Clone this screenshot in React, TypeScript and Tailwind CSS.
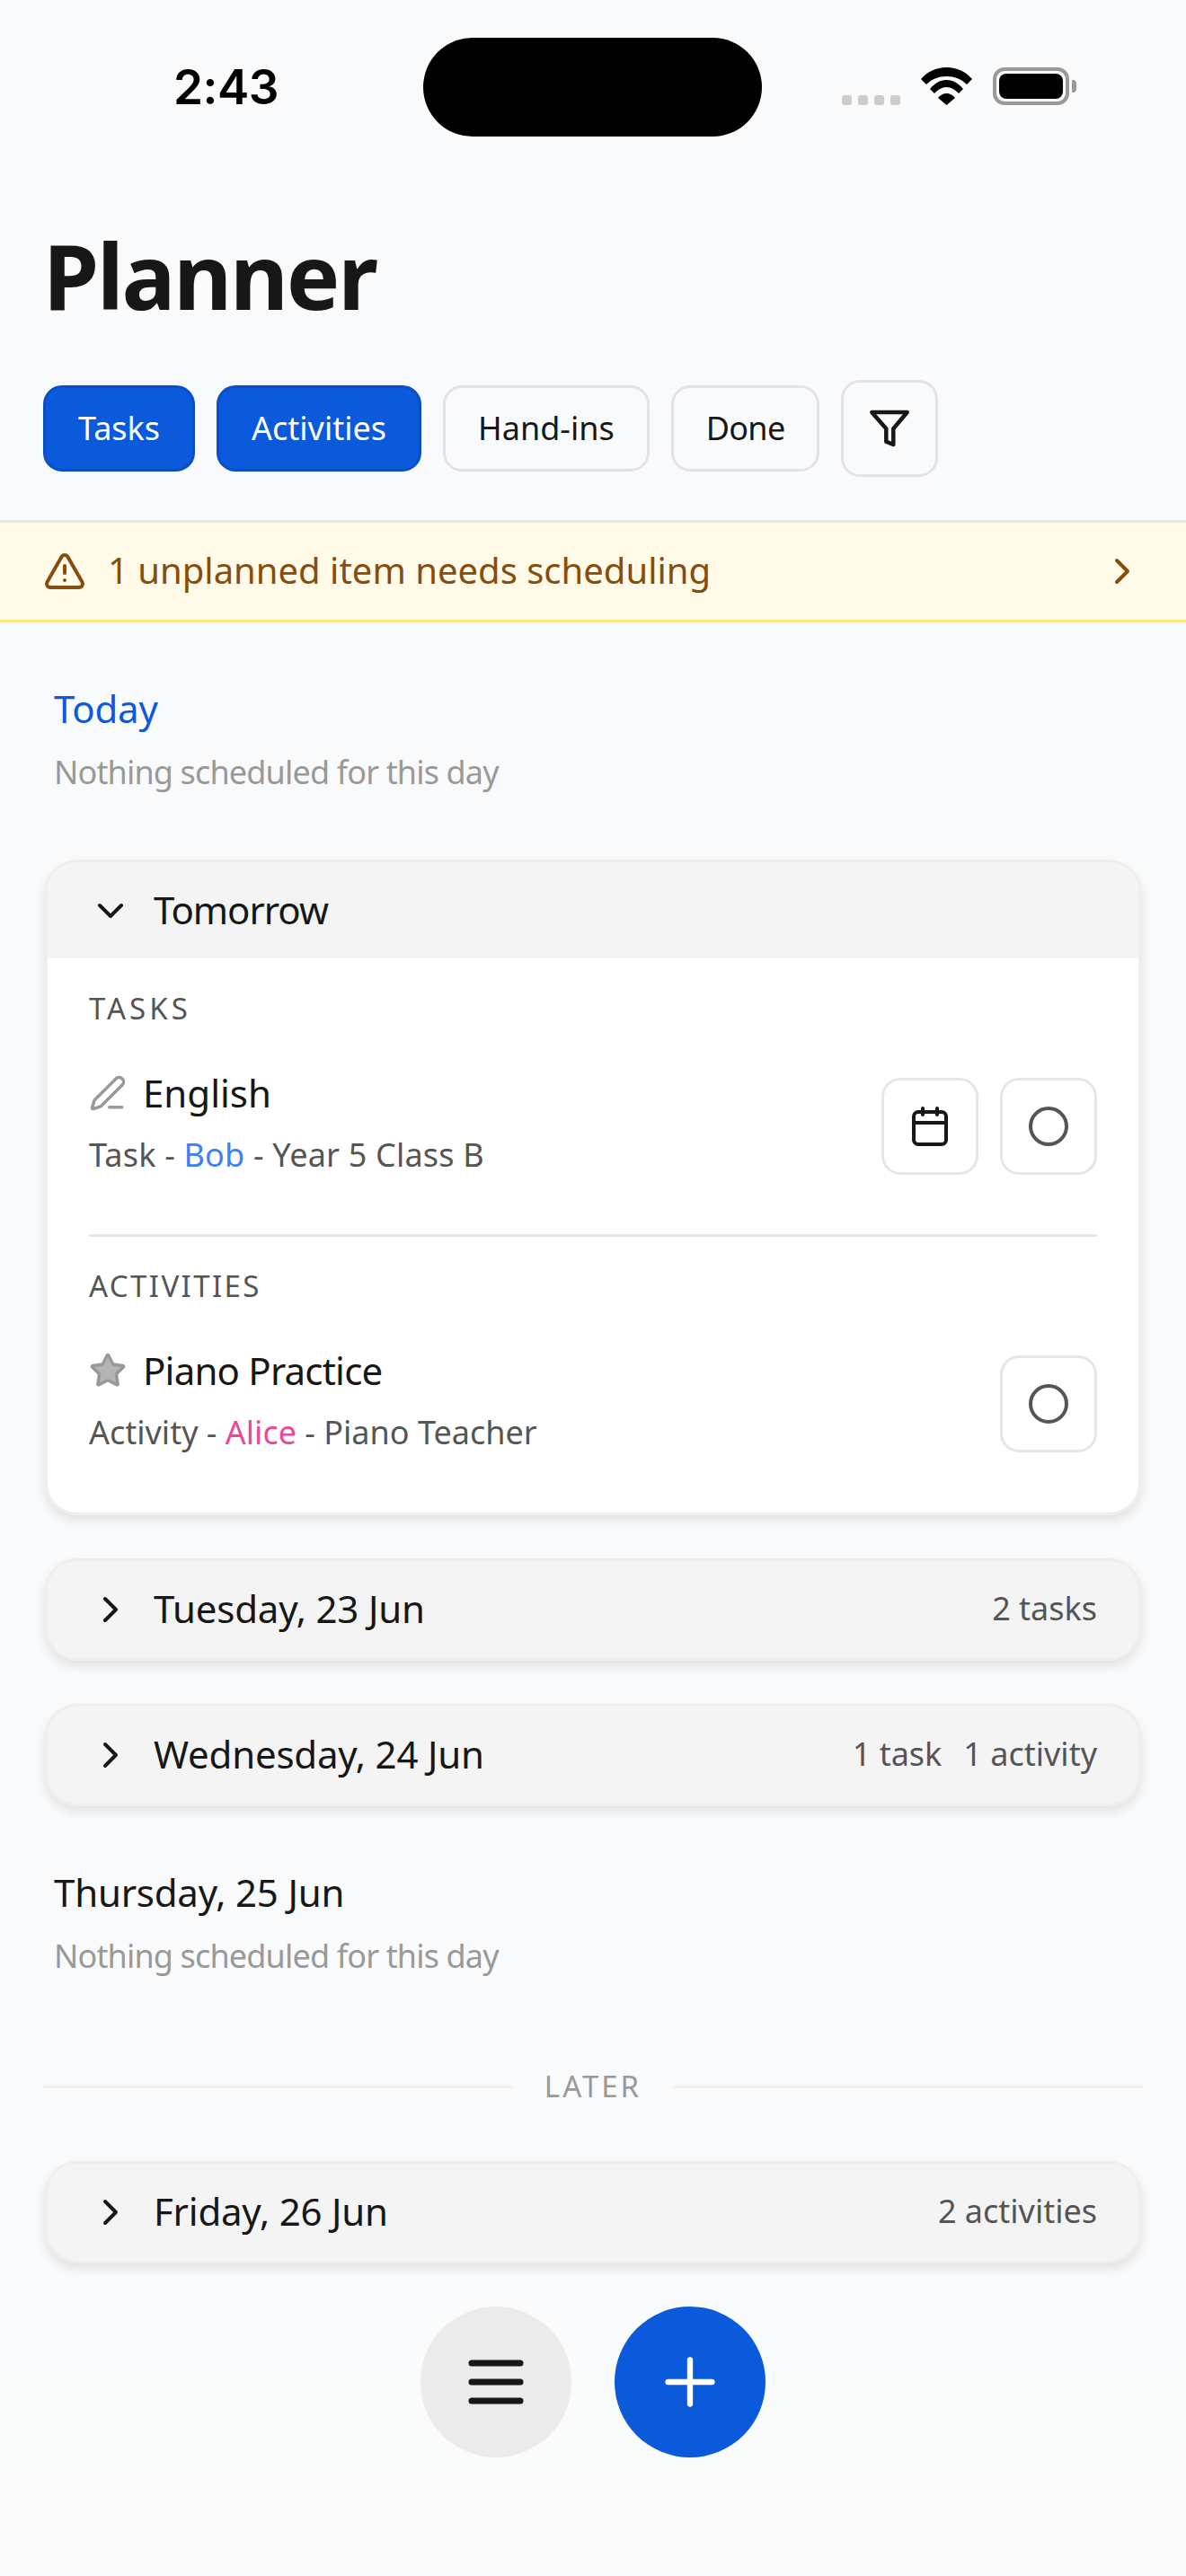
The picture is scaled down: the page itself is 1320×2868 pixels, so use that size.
import React from 'react';
import { ChevronDown, ChevronRight, Circle, PenLine, Plus, Star, TriangleAlert } from 'lucide-react';

const StatusBar = () => (
  <div className="grid grid-cols-[471px_377px_1fr] pt-[42px]">
    <div className="pl-[193px] pt-[2px] h-[110px] flex items-center font-['Inter',sans-serif] font-semibold text-[53px] text-black tracking-[-0.5px]">2:43</div>
    <div className="h-[110px] rounded-[55px] bg-black" />
    <div className="pl-[89px] pt-[33px] flex items-end h-[75px]">
      <div className="flex gap-[7px] mr-[23px]">
        <span className="w-[11px] h-[11px] rounded-[3px] bg-[#cccccc]" />
        <span className="w-[11px] h-[11px] rounded-[3px] bg-[#cccccc]" />
        <span className="w-[11px] h-[11px] rounded-[3px] bg-[#cccccc]" />
        <span className="w-[11px] h-[11px] rounded-[3px] bg-[#cccccc]" />
      </div>
      <svg width="57" height="42" viewBox="0 0 57 42" fill="#000">
        <path d="M0 13C7 5 17 0 28.500 0S50 5 57 13L51 19C45 13 37 10 28.500 10S12 13 6 19Z" />
        <path d="M10 24C15 18 21 14 28.500 14S42 18 47 24L42 29C38 25 34 22 28.500 22S19 25 15 29Z" />
        <path d="M19 34C21 31 25 29 28.500 29S36 31 38 34L28.500 42Z" />
      </svg>
      <div className="ml-[23px] w-[85px] h-[42px] rounded-[13px] border-[4px] border-[#999999] p-[3px]">
        <div className="w-full h-full rounded-[8px] bg-black" />
      </div>
      <div className="w-[5px] h-[14px] mb-[14px] ml-[3px] rounded-r-[4px] bg-[#999999]" />
    </div>
  </div>
);

const Chip = ({ label, active, tight }: { label: string; active?: boolean; tight?: boolean }) => (
  <div className={`h-[96px] px-[36px] flex items-center rounded-[21px] border-[3px] text-[36px] ${tight ? 'tracking-[-0.7px]' : ''} ${active ? 'bg-[#0b5adc] border-[#0a4fc4] text-white' : 'border-[#e2e3e6] text-[#171717]'}`}>
    {label}
  </div>
);

const IconButton = ({ children }: { children: React.ReactNode }) => (
  <div className="w-[108px] h-[108px] flex items-center justify-center rounded-[21px] border-[3px] border-[#e6e6e6] bg-white">
    {children}
  </div>
);

const CalendarIcon = () => (
  <svg width="40" height="44" viewBox="0 0 40 44" fill="none" stroke="#171717" strokeWidth="4" strokeLinecap="round">
    <rect x="2" y="6" width="36" height="36" rx="5" />
    <path d="M12 2V9M28 2V9M2 18H38" />
  </svg>
);

const FunnelIcon = () => (
  <svg width="46" height="42" viewBox="0 0 46 42" fill="none" stroke="#171717" strokeWidth="4.500" strokeLinejoin="round">
    <path d="M3.300 3H42.700L27.300 21.300V39L19.300 35.700V21.300Z" />
  </svg>
);

const MenuIcon = () => (
  <svg width="62" height="50" viewBox="0 0 62 50" stroke="#171717" strokeWidth="7" strokeLinecap="round">
    <path d="M4 4H58M4 25H58M4 46H58" />
  </svg>
);

const DayRow = ({ title, children }: { title: string; children: React.ReactNode }) => (
  <div className="h-[114px] px-[46px] flex items-center justify-between rounded-[36px] border-[3px] border-[#eeeeee] bg-[#f4f4f5] shadow-[0_6px_12px_rgba(0,0,0,0.1)]">
    <div className="flex items-center gap-[24px]">
      <ChevronRight size={48} color="#171717" strokeWidth={2} />
      <span className="-mt-[3px] text-[42px] tracking-[-0.2px] text-[#171717]">{title}</span>
    </div>
    <div className="-mt-[3px] flex gap-[24px] text-[36px] text-[#555555]">{children}</div>
  </div>
);

const EmptyDay = ({ title, today }: { title: string; today?: boolean }) => (
  <div className="pl-[10px] flex flex-col gap-[19px]">
    <div className={`text-[42px] leading-[57px] tracking-[-0.2px] ${today ? 'text-[#0b5adc]' : 'text-[#171717]'}`}>{title}</div>
    <div className="text-[36px] leading-[48px] tracking-[-0.85px] text-[#999999]">Nothing scheduled for this day</div>
  </div>
);

export default function App() {
  return (
    <div className="min-h-[2868px] bg-[#f9fafc] font-['Noto_Sans',sans-serif]">
      <StatusBar />

      <div className="pl-[48px] pt-[94px] pb-[48px] border-b-[3px] border-[#e6e6e6]">
        <h1 className="text-[100px] leading-[120px] font-bold tracking-[-2.200px] text-[#171717]">Planner</h1>
        <div className="mt-[57px] flex items-center gap-[24px]">
          <Chip label="Tasks" active />
          <Chip label="Activities" active />
          <Chip label="Hand-ins" />
          <Chip label="Done" tight />
          <div className="w-[108px] h-[108px] flex items-center justify-center rounded-[21px] border-[3px] border-[#e2e3e6]">
            <FunnelIcon />
          </div>
        </div>
      </div>

      <div className="h-[111px] pl-[48px] pr-[47px] flex items-center justify-between bg-[#fffbe8] border-b-[3px] border-[#fde68a]">
        <div className="flex items-center gap-[24px] text-[40px] text-[#854d0e]">
          <TriangleAlert size={48} color="#854d0e" strokeWidth={2} />
          <span className="-mt-[2px]">1 unplanned item needs scheduling</span>
        </div>
        <ChevronRight size={48} color="#854d0e" strokeWidth={2} />
      </div>

      <div className="px-[50px] pt-[67px]">
        <EmptyDay title="Today" today />

        <div className="mt-[73px] rounded-[36px] border-[3px] border-[#eeeeee] bg-white overflow-hidden shadow-[0_6px_12px_rgba(0,0,0,0.1)]">
          <div className="h-[107px] px-[46px] flex items-center gap-[24px] bg-[#f4f4f5]">
            <ChevronDown size={48} color="#171717" strokeWidth={2} />
            <span className="-mt-[3px] text-[42px] tracking-[-1px] text-[#171717]">Tomorrow</span>
          </div>
          <div className="px-[46px] pt-[35px] pb-[67px]">
            <div className="text-[33px] leading-[42px] tracking-[4px] text-[#555555]">TASKS</div>
            <div className="mt-[56px] h-[108px] flex items-center justify-between">
              <div className="-mt-[9px]">
                <div className="flex items-center gap-[18px] h-[54px] text-[42px] text-[#171717]">
                  <PenLine size={42} color="#999999" strokeWidth={2} />
                  English
                </div>
                <div className="mt-[18px] text-[36px] leading-[48px] tracking-[0.2px] text-[#555555]">
                  Task - <span className="text-[#3b82f6]">Bob</span> - Year 5 Class B
                </div>
              </div>
              <div className="flex gap-[24px]">
                <IconButton><CalendarIcon /></IconButton>
                <IconButton><Circle size={48} color="#555555" strokeWidth={2} /></IconButton>
              </div>
            </div>
            <div className="mt-[66px] h-[3px] bg-[#e6e6e6]" />
            <div className="mt-[34px] text-[33px] leading-[42px] tracking-[2.400px] text-[#555555]">ACTIVITIES</div>
            <div className="mt-[56px] h-[108px] flex items-center justify-between">
              <div className="-mt-[9px]">
                <div className="flex items-center gap-[18px] h-[54px] text-[42px] tracking-[-0.8px] text-[#171717]">
                  <Star size={42} color="#999999" fill="#b3b3b3" strokeWidth={2} />
                  Piano Practice
                </div>
                <div className="mt-[18px] text-[36px] leading-[48px] text-[#555555]">
                  Activity - <span className="text-[#ec4899]">Alice</span> - Piano Teacher
                </div>
              </div>
              <IconButton><Circle size={48} color="#555555" strokeWidth={2} /></IconButton>
            </div>
          </div>
        </div>

        <div className="mt-[48px] flex flex-col gap-[48px]">
          <DayRow title="Tuesday, 23 Jun"><span>2 tasks</span></DayRow>
          <DayRow title="Wednesday, 24 Jun"><span>1 task</span><span>1 activity</span></DayRow>
        </div>

        <div className="mt-[67px]"><EmptyDay title="Thursday, 25 Jun" /></div>

        <div className="mt-[100px] -mx-[2px] flex items-center gap-[36px]">
          <div className="flex-1 h-[3px] bg-[#f0f0f0]" />
          <span className="text-[33px] leading-[42px] tracking-[3px] text-[#999999]">LATER</span>
          <div className="flex-1 h-[3px] bg-[#f0f0f0]" />
        </div>

        <div className="mt-[62px]"><DayRow title="Friday, 26 Jun"><span>2 activities</span></DayRow></div>
      </div>

      <div className="mt-[23px] h-[320px] pt-[25px] flex justify-center gap-[48px] bg-linear-to-b from-[#f9fafc] to-[#fafbf9]">
        <div className="w-[168px] h-[168px] rounded-full bg-[#ebebeb] flex items-center justify-center">
          <MenuIcon />
        </div>
        <div className="w-[168px] h-[168px] rounded-full bg-[#0b5adc] flex items-center justify-center">
          <Plus size={84} color="#ffffff" strokeWidth={1.800} />
        </div>
      </div>
    </div>
  );
}
